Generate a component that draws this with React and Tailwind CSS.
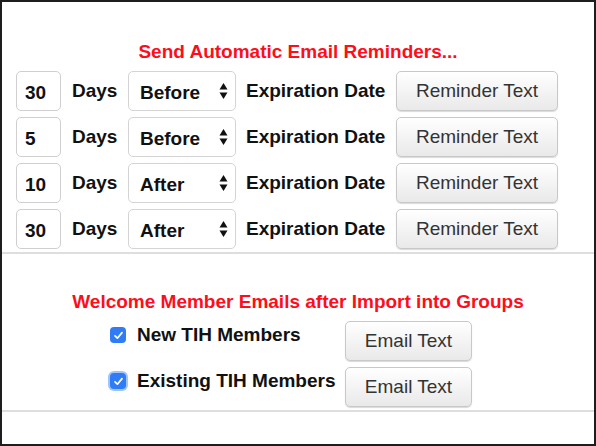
import React from "react";

const font = { fontFamily: '"Liberation Sans", Arial, Helvetica, sans-serif' };

function Arrows() {
  return (
    <svg width="9" height="18" viewBox="0 0 9 18" className="shrink-0">
      <path d="M4.5 1 L8.5 7.5 L0.5 7.5 Z" fill="#111" />
      <path d="M4.5 17 L8.5 10.5 L0.5 10.5 Z" fill="#111" />
    </svg>
  );
}

function Btn({ children, w }) {
  return (
    <div
      className={`${w} h-[40px] flex items-center justify-center rounded-[5px] border border-[#c8c8c8] bg-gradient-to-b from-[#ffffff] to-[#e9e9e9] shadow-[0_1px_1px_rgba(0,0,0,0.15)] text-[19px] leading-[20px] text-[#333]`}
    >
      {children}
    </div>
  );
}

function ReminderRow({ days, when }) {
  return (
    <div className="flex items-center pl-[14px] h-[40px]">
      <div className="w-[45px] h-[40px] rounded-[5px] border border-[#cfcfcf] flex items-center pl-[8px] pt-[3px] text-[19px] leading-[20px] font-bold text-[#111]">
        {days}
      </div>
      <div className="ml-[11px] w-[56px] text-[19px] leading-[20px] font-bold text-[#111] -mt-[1px]">Days</div>
      <div className="w-[108px] h-[40px] rounded-[5px] border border-[#d4d4d4] flex items-center justify-between pl-[11px] pr-[7px] pt-[3px] text-[19px] leading-[20px] font-bold text-[#111]">
        <span>{when}</span>
        <span className="-mt-[3px]"><Arrows /></span>
      </div>
      <div className="ml-[10px] w-[150px] text-[19px] leading-[20px] font-bold text-[#111] -mt-[1px] whitespace-nowrap">
        Expiration Date
      </div>
      <Btn w="w-[162px]">Reminder Text</Btn>
    </div>
  );
}

function Check({ focus }) {
  return (
    <div
      className={`w-[16px] h-[16px] rounded-[4px] bg-[#2f7cf6] flex items-center justify-center shrink-0 ${
        focus ? "shadow-[0_0_0_2px_rgba(80,150,250,0.55)]" : ""
      }`}
    >
      <svg width="11" height="11" viewBox="0 0 11 11">
        <path d="M2 5.8 L4.4 8.2 L9 2.6" fill="none" stroke="#fff" strokeWidth="1.7" strokeLinecap="round" strokeLinejoin="round" />
      </svg>
    </div>
  );
}

function MemberRow({ label, focus }) {
  return (
    <div className="flex items-start h-[40px] pl-[108px]">
      <div className="w-[235px] flex items-start">
        <div className="mt-[6px]">
          <Check focus={focus} />
        </div>
        <div className="ml-[11px] mt-[4px] text-[19px] leading-[20px] font-bold text-[#111] whitespace-nowrap">{label}</div>
      </div>
      <Btn w="w-[127px]">Email Text</Btn>
    </div>
  );
}

export default function App() {
  return (
    <div style={font} className="w-[596px] h-[446px] border-2 border-[#1e1e1e] bg-white flex flex-col overflow-hidden">
      <div className="pt-[40px] text-center text-[19px] leading-[20px] font-bold text-[#ff0d1a]">
        Send Automatic Email Reminders...
      </div>
      <div className="mt-[9px] flex flex-col gap-[6px]">
        <ReminderRow days="30" when="Before" />
        <ReminderRow days="5" when="Before" />
        <ReminderRow days="10" when="After" />
        <ReminderRow days="30" when="After" />
      </div>
      <div className="mt-[3px] h-[2px] bg-[#dedede]" />
      <div className="mt-[38px] text-center text-[19px] leading-[20px] font-bold text-[#ff0d1a]">
        Welcome Member Emails after Import into Groups
      </div>
      <div className="mt-[9px] flex flex-col gap-[6px]">
        <MemberRow label="New TIH Members" />
        <MemberRow label="Existing TIH Members" focus />
      </div>
      <div className="mt-[3px] h-[2px] bg-[#dedede]" />
    </div>
  );
}
